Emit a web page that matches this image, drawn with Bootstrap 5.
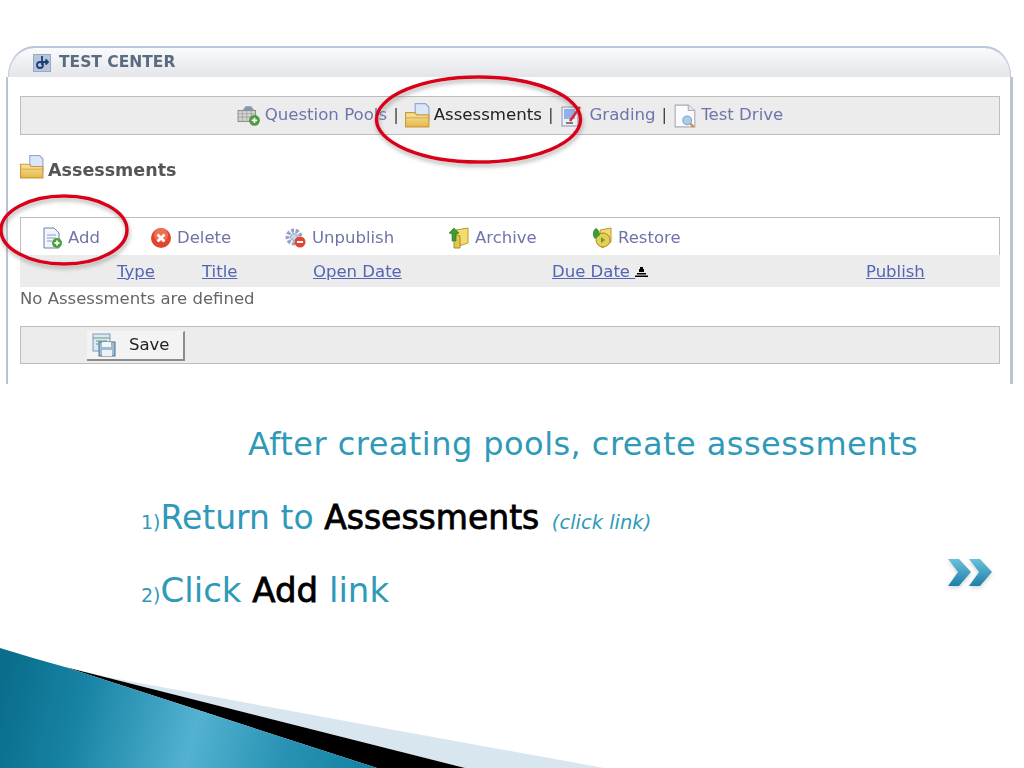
<!DOCTYPE html>
<html lang="en">
<head>
  <meta charset="UTF-8">
  <title>After creating pools, create assessments</title>
  <link href="https://cdn.jsdelivr.net/npm/bootstrap@5.3.1/dist/css/bootstrap.min.css" rel="stylesheet">
  <style>
    body { background: #fff; font-family: "DejaVu Sans", sans-serif; }
    .slide-page { width: 1024px; height: 768px; overflow: hidden; position: relative; }
    .shot { padding-top: 46px; margin-left: 6px; width: 1007px; height: 384px; filter: blur(.5px); }
    .tab-head { height: 31px; margin: 0 2px; padding-left: 25px; border-top: 2px solid #bcc6de; border-radius: 26px 26px 0 0 / 30px 30px 0 0; background: linear-gradient(#fafbfc, #e3e5e9); box-shadow: inset 1px 0 0 #c5cde0, inset -1px 0 0 #c5cde0; color: #5b6b82; font-size: 15.5px; font-weight: 700; }
    .shot-body { height: 307px; padding: 19px 10px 0 12px; border-left: 2px solid #b9c2d6; border-right: 3px solid #bcc4d4; color: #666; }
    .gray-bar { background: #ececec; border: 1px solid #bdbdbd; }
    .top-nav { height: 39px; font-size: 16.6px; color: #6f74ac; }
    .top-nav .sep { color: #444; margin: 0 6px; }
    .top-nav .here { color: #222; }
    .page-title { height: 82px; padding-top: 20px; font-size: 17.5px; font-weight: 700; color: #555; margin: 0; }
    .page-title span { padding-top: 5px; }
    .tool-row { height: 38px; background: #fff; border: 1px solid #bdbdbd; border-bottom: 0; padding: 3px 0 0 20px; font-size: 16.5px; color: #7074a8; }
    .tool-row > span { white-space: nowrap; gap: 5px; }
    .tool-add { width: 109px; } .tool-del { width: 135px; } .tool-unp { width: 163px; } .tool-arc { width: 143px; }
    .assess-table { width: 100%; margin: 0; table-layout: fixed; --bs-table-bg: transparent; }
    .assess-table th { background: #ececec; height: 32px; padding: 2px 0 0; font-size: 16.5px; font-weight: 400; vertical-align: middle; }
    .assess-table td { padding: 0; height: 21px; font-size: 16.5px; color: #666; vertical-align: middle; }
    .assess-table a { color: #5365b4; }
    .col-type { width: 182px; padding-left: 97px !important; }
    .col-title { width: 111px; }
    .col-open { width: 239px; }
    .col-due { width: 314px; }
    .save-bar { height: 38px; margin-top: 14px; padding-left: 66px; }
    .save-btn { height: 30px; width: 98px; margin-top: 4px; padding: 0 0 0 5px; gap: 13px; border: 0; border-top: 1px solid #f4f4f4; border-right: 2px solid #8c8c8c; border-bottom: 2px solid #8c8c8c; border-radius: 0; background: #f3f3f3; color: #222; font-size: 16.5px; }
    .slide-text { color: #2f9ab8; font-family: "DejaVu Sans", sans-serif; }
    .slide-head { margin: 0; padding: 38px 0 0 248px; font-size: 32px; font-weight: 400; line-height: 44px; white-space: nowrap; letter-spacing: .45px; }
    .slide-steps { margin: 0; padding: 0 0 0 141px; list-style: none; font-size: 33px; line-height: 44px; }
    .slide-steps li { margin-top: 23px; white-space: nowrap; }
    .slide-steps li:first-child { margin-top: 30px; }
    .slide-steps li:last-child { font-size: 34px; }
    .slide-steps .num { font-size: 19px; }
    .slide-steps b { color: #000; font-weight: 400; -webkit-text-stroke: .8px #000; }
    .slide-steps i { font-size: 19.5px; margin-left: 2px; }
    .overlay { position: absolute; left: 0; pointer-events: none; }
  </style>
</head>
<body>
  <svg width="0" height="0" class="d-block">
    <defs>
      <linearGradient id="fold" x1="0" y1="0" x2="0" y2="1"><stop offset="0" stop-color="#f7e6a0"/><stop offset="1" stop-color="#e6b64a"/></linearGradient>
      <linearGradient id="teal" gradientUnits="userSpaceOnUse" x1="0" y1="690" x2="400" y2="790"><stop offset="0" stop-color="#0a6d8c"/><stop offset=".2" stop-color="#1883a5"/><stop offset=".48" stop-color="#53b2d0"/><stop offset=".7" stop-color="#2a93b5"/><stop offset="1" stop-color="#097b9c"/></linearGradient>
      <linearGradient id="chev" x1="0" y1="0" x2="0" y2="1"><stop offset="0" stop-color="#6cc0dc"/><stop offset="1" stop-color="#1e7fa9"/></linearGradient>
      <filter id="soft" x="-10%" y="-10%" width="120%" height="130%"><feDropShadow dx="1" dy="3" stdDeviation="2" flood-color="#777" flood-opacity=".55"/></filter>
      <filter id="softer" x="-10%" y="-10%" width="120%" height="130%"><feDropShadow dx="0" dy="2" stdDeviation="2" flood-color="#999" flood-opacity=".4"/></filter>
      <symbol id="i-folder" viewBox="0 0 22 22">
        <path d="M9 .5h9l3 3v12H9z" fill="#dbe6f8" stroke="#8fa6d0"/>
        <path d="M.5 8.500h8l2 2h10.500v10.500H.5z" fill="url(#fold)" stroke="#c99a3a"/>
        <path d="M1 13h20" stroke="#c99a3a" stroke-opacity=".6"/>
      </symbol>
      <symbol id="i-pools" viewBox="0 0 22 22">
        <path d="M5 6l3-4h5l3 4z" fill="#7f97b5"/>
        <rect x="1" y="6" width="16" height="10" fill="#d4d6d4" stroke="#8b8f8c"/>
        <path d="M1 9h16M1 12h16M5 6v10M9 6v10M13 6v10" stroke="#a9acaa" fill="none"/>
        <circle cx="16" cy="15" r="5" fill="#4f9a3d"/><path d="M13.500 15h5M16 12.500v5" stroke="#fff" stroke-width="1.600"/>
      </symbol>
      <symbol id="i-grade" viewBox="0 0 22 22">
        <rect x="2" y="2" width="16" height="19" fill="#eef1f8" stroke="#8d93a8"/>
        <rect x="4" y="4" width="11" height="10" fill="#8fb0ea"/>
        <path d="M6 18h7" stroke="#555" stroke-width="1.500"/>
        <path d="M20 2L10 16" stroke="#d82a24" stroke-width="2.500"/>
      </symbol>
      <symbol id="i-test" viewBox="0 0 22 22">
        <path d="M2 1h12l6 5v15H2z" fill="#fbfbfd" stroke="#a8abb8"/>
        <path d="M14 1v5h6" fill="#e6e8ef" stroke="#a8abb8"/>
        <circle cx="13" cy="15" r="4" fill="#a9cdea" stroke="#7fa3c4"/>
        <path d="M16 18l3 3" stroke="#d58a3c" stroke-width="2"/>
      </symbol>
      <symbol id="i-add" viewBox="0 0 22 22">
        <path d="M3 1h10l5 5v15H3z" fill="#f2f5fb" stroke="#6e7fae"/>
        <path d="M6 8h9M6 11h9M6 14h5" stroke="#8b9ac0"/>
        <circle cx="16" cy="16" r="5" fill="#47a23a"/><path d="M13.500 16h5M16 13.500v5" stroke="#fff" stroke-width="1.800"/>
      </symbol>
      <symbol id="i-del" viewBox="0 0 22 22">
        <circle cx="11" cy="11" r="10" fill="#e0452f"/><circle cx="11" cy="8" r="7" fill="#ee6f52"/>
        <path d="M7.500 7.500l7 7M14.500 7.500l-7 7" stroke="#fff" stroke-width="2.600"/>
      </symbol>
      <symbol id="i-unpub" viewBox="0 0 22 22">
        <circle cx="9" cy="10" r="6.500" fill="none" stroke="#94a6c6" stroke-width="4" stroke-dasharray="3 1.500"/>
        <circle cx="9" cy="10" r="3.500" fill="#c8d4e8" stroke="#94a6c6"/>
        <circle cx="15" cy="15" r="5.500" fill="#e2452f"/><path d="M12 15h6" stroke="#fff" stroke-width="2"/>
      </symbol>
      <symbol id="i-arch" viewBox="0 0 22 22">
        <path d="M8 3l12-2v15L8 20z" fill="#f2dc6e" stroke="#b89a34"/>
        <path d="M6 21V7l6 2v12z" fill="#e3c84c" stroke="#a68a2c"/>
        <path d="M6 1L1 6l3 1v7h4V7l3-1z" fill="#3f9a34" stroke="#2c7426" stroke-width=".6"/>
      </symbol>
      <symbol id="i-rest" viewBox="0 0 22 22">
        <path d="M9 3l11-2v14l-9 6z" fill="#f2dc6e" stroke="#b89a34"/>
        <circle cx="12" cy="13" r="7" fill="#e9cd50" stroke="#a68a2c"/>
        <path d="M5 1C1 4 1 9 4 12l5-4C9 5 7 2 5 1z" fill="#3f9a34"/>
        <path d="M10 10l4 3-4 3z" fill="#4da63e"/>
      </symbol>
      <symbol id="i-save" viewBox="0 0 24 24">
        <rect x="1" y="1" width="17" height="17" fill="#dbe8f2" stroke="#7d9bb8"/>
        <path d="M1 5h17M4 8h11M4 11h11" stroke="#5f9f88"/>
        <rect x="7" y="9" width="16" height="14" fill="#9bbcd4" stroke="#50708c"/>
        <rect x="10" y="9" width="9" height="5" fill="#f2f5f8"/>
        <rect x="10" y="17" width="10" height="6" fill="#eef2f4"/>
      </symbol>
    </defs>
  </svg>

  <div class="slide-page">
    <div class="shot">
      <div class="tab-head d-flex align-items-center">
        <svg class="me-1" width="18" height="18" viewBox="0 0 18 18"><rect x=".5" y=".5" width="17" height="17" fill="#b7c6dc" stroke="#98a9c4"/><circle cx="7" cy="11" r="3" fill="none" stroke="#1f3f73" stroke-width="1.800"/><path d="M9 2v9M9 8h6M12.500 5.500L15 8l-2.500 2.500" fill="none" stroke="#1f3f73" stroke-width="1.800"/></svg>
        <span class="ms-1">TEST CENTER</span>
      </div>
      <div class="shot-body">
        <div class="gray-bar top-nav d-flex align-items-center justify-content-center">
          <svg class="me-1" width="24" height="24"><use href="#i-pools"/></svg><span>Question Pools</span><span class="sep">|</span>
          <svg class="me-1" width="25" height="25"><use href="#i-folder"/></svg><span class="here">Assessments</span><span class="sep">|</span>
          <svg class="me-2" width="22" height="22"><use href="#i-grade"/></svg><span>Grading</span><span class="sep">|</span>
          <svg class="me-1" width="24" height="24"><use href="#i-test"/></svg><span>Test Drive</span>
        </div>
        <h1 class="page-title d-flex align-items-start gap-1">
          <svg width="24" height="24"><use href="#i-folder"/></svg><span>Assessments</span>
        </h1>
        <div class="tool-row d-flex align-items-center">
          <span class="tool-add d-flex align-items-center"><svg width="22" height="22"><use href="#i-add"/></svg>Add</span>
          <span class="tool-del d-flex align-items-center"><svg width="22" height="22"><use href="#i-del"/></svg>Delete</span>
          <span class="tool-unp d-flex align-items-center"><svg width="22" height="22"><use href="#i-unpub"/></svg>Unpublish</span>
          <span class="tool-arc d-flex align-items-center"><svg width="22" height="22"><use href="#i-arch"/></svg>Archive</span>
          <span class="d-flex align-items-center"><svg width="22" height="22"><use href="#i-rest"/></svg>Restore</span>
        </div>
        <table class="table table-borderless assess-table">
          <thead>
            <tr>
              <th class="col-type"><a href="#">Type</a></th>
              <th class="col-title"><a href="#">Title</a></th>
              <th class="col-open"><a href="#">Open Date</a></th>
              <th class="col-due"><a href="#">Due Date <svg width="13" height="10" viewBox="0 0 13 10"><path d="M5 0h3v2h1v3H4V2h1zM2 6h9v1.500H2zM0 8.500h13V10H0z" fill="#000"/></svg></a></th>
              <th><a href="#">Publish</a></th>
            </tr>
          </thead>
          <tbody>
            <tr><td colspan="5">No Assessments are defined</td></tr>
          </tbody>
        </table>
        <div class="gray-bar save-bar">
          <button class="save-btn d-flex align-items-center" type="button"><svg width="24" height="24"><use href="#i-save"/></svg><span>Save</span></button>
        </div>
      </div>
    </div>

    <div class="slide-text">
      <h2 class="slide-head slide-text">After creating pools, create assessments</h2>
      <ol class="slide-steps">
        <li><span class="num">1)</span>Return to <b>Assessments</b> <i>(click link)</i></li>
        <li><span class="num">2)</span>Click <b>Add</b> link</li>
      </ol>
    </div>

    <!-- red call-outs drawn over the screenshot -->
    <svg class="overlay top-0" width="1024" height="290" viewBox="0 0 1024 290">
      <g fill="none" stroke="#d9001b" stroke-width="3.500" filter="url(#soft)">
        <ellipse cx="478.500" cy="119.500" rx="102" ry="42.500"/>
        <ellipse cx="64" cy="230" rx="63" ry="34"/>
      </g>
    </svg>
    <svg class="overlay top-0" width="1024" height="768" viewBox="0 0 1024 768">
      <path d="M65 667L107 677Q350 722 604 768H465z" fill="#d8e6ef"/>
      <path d="M65 667L465 768H377z" fill="#000"/>
      <path d="M0 648Q32 658 65 667L377 768H0z" fill="url(#teal)"/>
      <g fill="url(#chev)" filter="url(#softer)">
        <path d="M948 559h11l12 13-12 14h-11l10-14z"/>
        <path d="M969 559h11l12 13-12 14h-11l10-14z"/>
      </g>
    </svg>
  </div>
  <script src="https://cdn.jsdelivr.net/npm/bootstrap@5.3.1/dist/js/bootstrap.bundle.min.js"></script>
</body>
</html>
